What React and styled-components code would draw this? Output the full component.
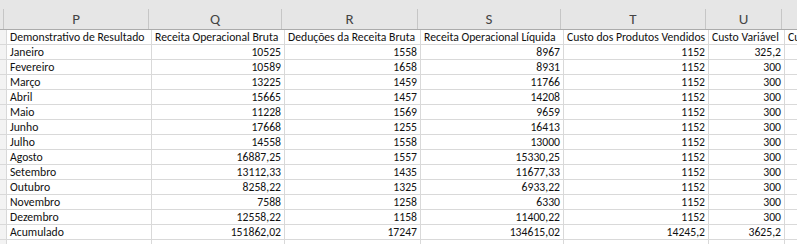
import React from "react";
import styled, {createGlobalStyle} from "styled-components";

const GlobalStyle = createGlobalStyle`
  * { box-sizing: border-box; }
  body {
    margin: 0;
    background: #fff;
    font-family: Carlito, Calibri, Lato, "Liberation Sans", sans-serif;
  }
`;

const widths = [4, 145, 133, 136, 143, 145, 76, 100];
const letters = ["", "P", "Q", "R", "S", "T", "U", "V"];

const titles = [
  "Demonstrativo de Resultado",
  "Receita Operacional Bruta",
  "Deduções da Receita Bruta",
  "Receita Operacional Líquida",
  "Custo dos Produtos Vendidos",
  "Custo Variável",
  "Custo Fixo",
];

const rows = [
  ["Janeiro", "10525", "1558", "8967", "1152", "325,2"],
  ["Fevereiro", "10589", "1658", "8931", "1152", "300"],
  ["Março", "13225", "1459", "11766", "1152", "300"],
  ["Abril", "15665", "1457", "14208", "1152", "300"],
  ["Maio", "11228", "1569", "9659", "1152", "300"],
  ["Junho", "17668", "1255", "16413", "1152", "300"],
  ["Julho", "14558", "1558", "13000", "1152", "300"],
  ["Agosto", "16887,25", "1557", "15330,25", "1152", "300"],
  ["Setembro", "13112,33", "1435", "11677,33", "1152", "300"],
  ["Outubro", "8258,22", "1325", "6933,22", "1152", "300"],
  ["Novembro", "7588", "1258", "6330", "1152", "300"],
  ["Dezembro", "12558,22", "1158", "11400,22", "1152", "300"],
  ["Acumulado", "151862,02", "17247", "134615,02", "14245,2", "3625,2"],
  ["", "", "", "", "", ""],
];

const Sheet = styled.div`
  width: 797px;
  height: 244px;
  overflow: hidden;
  display: flex;
  flex-direction: column;
`;

const HeaderRow = styled.div`
  display: flex;
  height: 30px;
  flex: none;
  background: #e6e6e6;
  border-bottom: 1px solid #ababab;
`;

const HeaderCell = styled.div`
  flex: none;
  width: ${(p) => p.w}px;
  display: flex;
  align-items: flex-end;
`;

const Letter = styled.div`
  width: 100%;
  height: 20px;
  border-right: 1px solid #c6c6c6;
  display: flex;
  align-items: center;
  justify-content: center;
  font-size: 15px;
  color: #444;
`;

const Row = styled.div`
  display: flex;
  height: 15px;
  flex: none;
  border-bottom: 1px solid #d9d9d9;
`;

const Cell = styled.div`
  flex: none;
  width: ${(p) => p.w}px;
  border-right: 1px solid #d9d9d9;
  padding: 0 3px;
  font-size: 11.7px;
  line-height: 14px;
  color: #111;
  white-space: nowrap;
  overflow: hidden;
  text-align: ${(p) => (p.num ? "right" : "left")};
  background: ${(p) => (p.stub ? "#f3f3f3" : "#fff")};
`;

function App() {
  return (
    <Sheet>
      <GlobalStyle />
      <HeaderRow>
        {widths.map((w, i) => (
          <HeaderCell key={i} w={w}>
            <Letter>{letters[i]}</Letter>
          </HeaderCell>
        ))}
      </HeaderRow>
      <Row>
        <Cell w={widths[0]} stub />
        {titles.map((t, i) => (
          <Cell key={i} w={widths[i + 1]}>{t}</Cell>
        ))}
      </Row>
      {rows.map((r, ri) => (
        <Row key={ri}>
          <Cell w={widths[0]} stub />
          {r.map((v, ci) => (
            <Cell key={ci} w={widths[ci + 1]} num={ci > 0}>{v}</Cell>
          ))}
          <Cell w={widths[7]} />
        </Row>
      ))}
    </Sheet>
  );
}

export default App;
